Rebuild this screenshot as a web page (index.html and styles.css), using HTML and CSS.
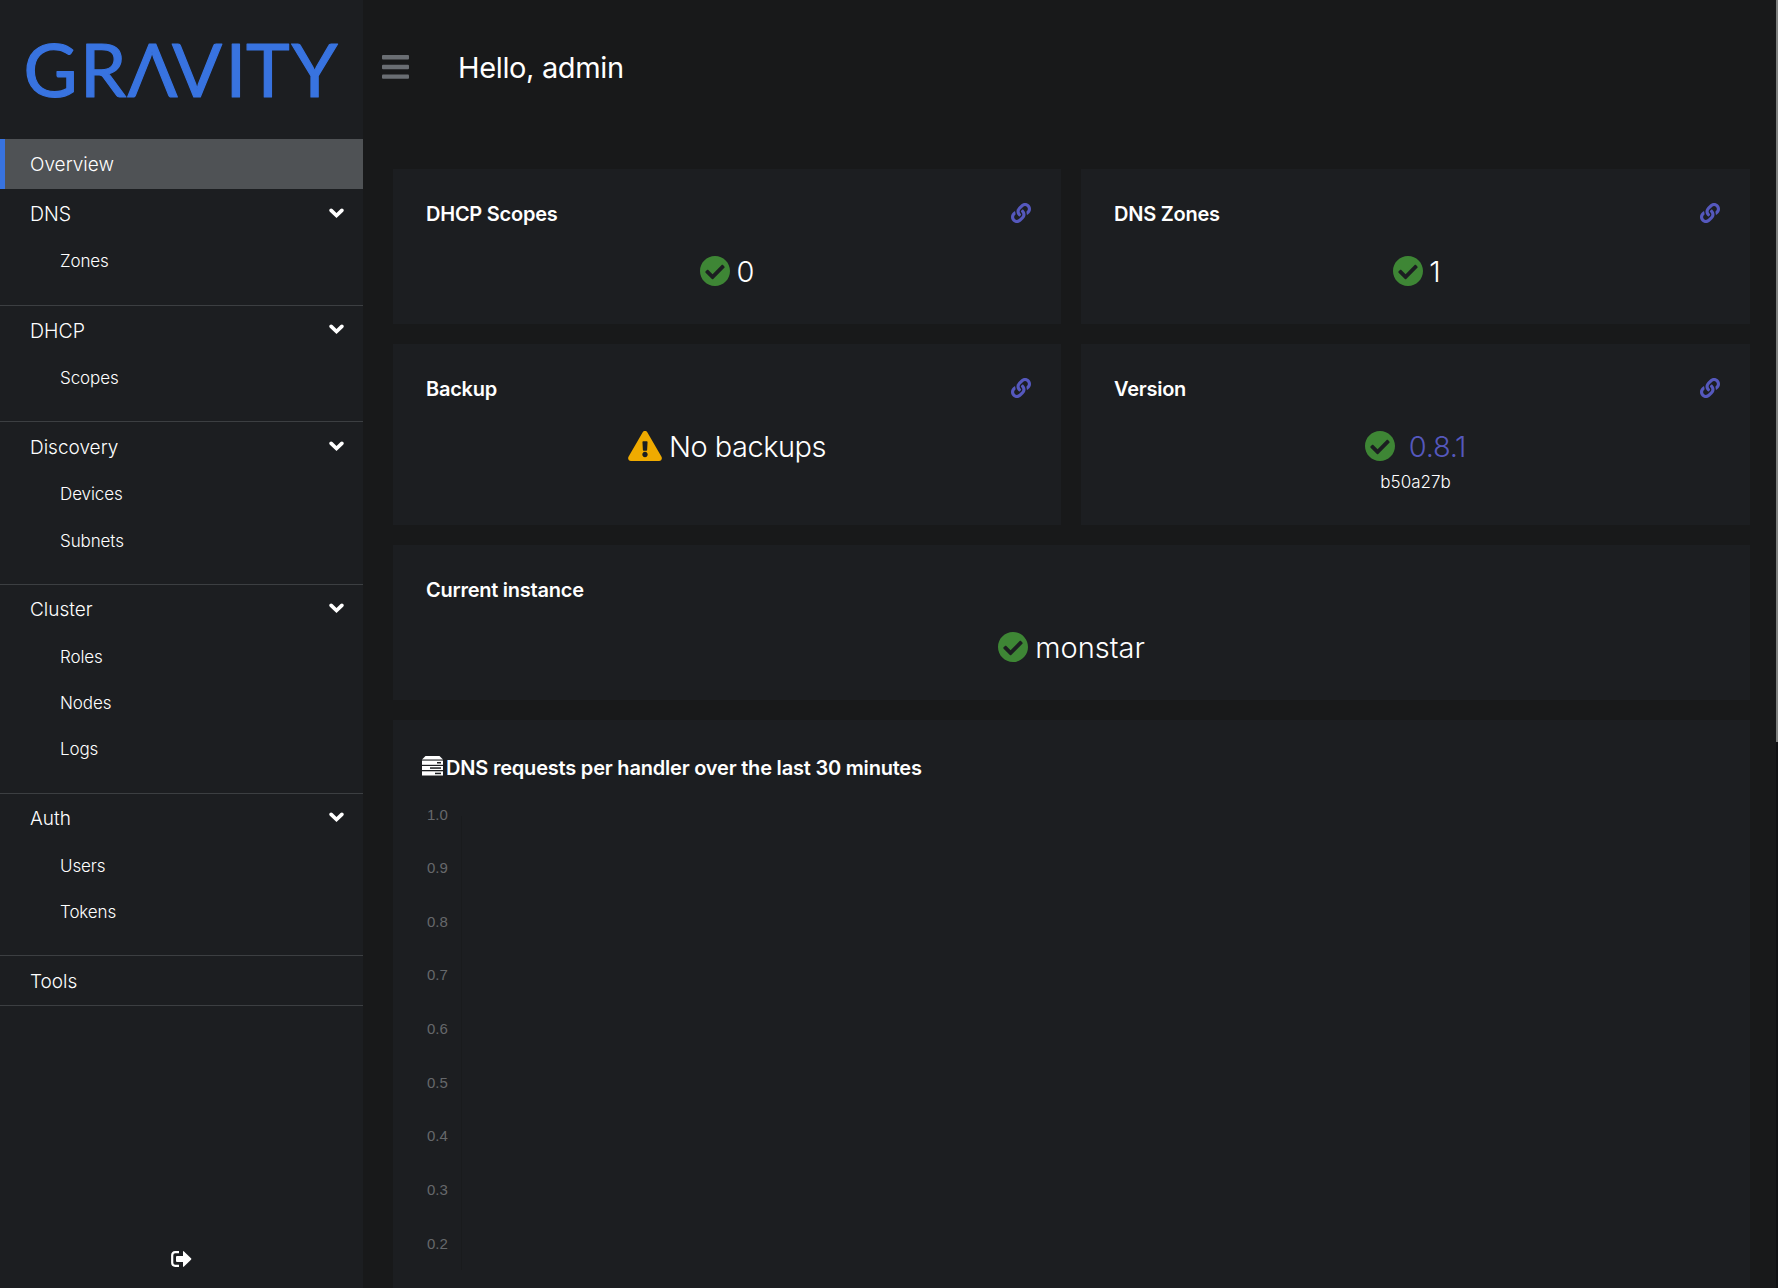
FILE: index.html
```html
<!DOCTYPE html>
<html lang="en">
<head>
<meta charset="utf-8">
<title>Gravity</title>
<link rel="stylesheet" href="styles.css">
</head>
<body>
<svg class="defs" width="0" height="0" aria-hidden="true">
  <symbol id="check" viewBox="8 8 496 496"><path d="M504 256c0 136.967-111.033 248-248 248S8 392.967 8 256 119.033 8 256 8s248 111.033 248 248zM227.314 387.314l184-184c6.248-6.248 6.248-16.379 0-22.627l-22.627-22.627c-6.248-6.249-16.379-6.249-22.628 0L216 308.118l-70.059-70.059c-6.248-6.248-16.379-6.248-22.628 0l-22.627 22.627c-6.248 6.248-6.248 16.379 0 22.627l104 104c6.249 6.249 16.379 6.249 22.628.001z"/></symbol>
  <symbol id="warn" viewBox="0 0 576 512"><path d="M569.517 440.013C587.975 472.007 564.806 512 527.94 512H48.054c-36.937 0-59.999-40.055-41.577-71.987L246.423 23.985c18.467-32.009 64.72-31.951 83.154 0l239.94 416.028zM288 354c-25.405 0-46 20.595-46 46s20.595 46 46 46 46-20.595 46-46-20.595-46-46-46zm-43.673-165.346l7.418 136c.347 6.364 5.609 11.346 11.982 11.346h48.546c6.373 0 11.635-4.982 11.982-11.346l7.418-136c.375-6.874-5.098-12.654-11.982-12.654h-63.383c-6.884 0-12.356 5.78-11.981 12.654z"/></symbol>
  <symbol id="link" viewBox="0 0 512 512"><path d="M326.612 185.391c59.747 59.809 58.927 155.698.36 214.59-.11.12-.24.25-.36.37l-67.2 67.2c-59.27 59.27-155.699 59.262-214.96 0-59.27-59.26-59.27-155.7 0-214.96l37.106-37.106c9.84-9.84 26.786-3.3 27.294 10.606.648 17.722 3.826 35.527 9.69 52.721 1.986 5.822.567 12.262-3.783 16.612l-13.087 13.087c-28.026 28.026-28.905 73.66-1.155 101.96 28.024 28.579 74.086 28.749 102.325.51l67.2-67.19c28.191-28.191 28.073-73.757 0-101.83-3.701-3.694-7.429-6.564-10.341-8.569a16.037 16.037 0 0 1-6.947-12.606c-.396-10.567 3.348-21.456 11.698-29.806l21.054-21.055c5.521-5.521 14.182-6.199 20.584-1.731a152.482 152.482 0 0 1 20.522 17.197zM467.547 44.449c-59.261-59.262-155.69-59.27-214.96 0l-67.2 67.2c-.12.12-.25.25-.36.37-58.566 58.892-59.387 154.781.36 214.59a152.454 152.454 0 0 0 20.521 17.196c6.402 4.468 15.064 3.789 20.584-1.731l21.054-21.055c8.35-8.35 12.094-19.239 11.698-29.806a16.037 16.037 0 0 0-6.947-12.606c-2.912-2.005-6.64-4.875-10.341-8.569-28.073-28.073-28.191-73.639 0-101.83l67.2-67.19c28.239-28.239 74.3-28.069 102.325.51 27.75 28.3 26.872 73.934-1.155 101.96l-13.087 13.087c-4.35 4.35-5.769 10.79-3.783 16.612 5.864 17.194 9.042 34.999 9.69 52.721.509 13.906 17.454 20.446 27.294 10.606l37.106-37.106c59.271-59.259 59.271-155.699.001-214.959z"/></symbol>
  <symbol id="chev" viewBox="0 0 14 9"><path d="M2 2l5 4.8L12 2" fill="none" stroke="currentColor" stroke-width="3.4" stroke-linecap="round"/></symbol>
</svg>
<div class="page">
  <aside class="sidebar">
    <div class="brand">
      <svg class="logo" width="363" height="139" role="img" aria-label="GRAVITY"><text y="96.5" x="23.5 80 127.5 172 225.5 246 291.5">GRΛVITY</text></svg>
    </div>
    <nav class="nav">
      <a class="row current">Overview</a>
      <section class="group"><div class="row caps">DNS<svg class="chev"><use href="#chev"/></svg></div>
        <ul><li>Zones</li></ul></section>
      <section class="group"><div class="row caps">DHCP<svg class="chev"><use href="#chev"/></svg></div>
        <ul><li>Scopes</li></ul></section>
      <section class="group"><div class="row">Discovery<svg class="chev"><use href="#chev"/></svg></div>
        <ul><li>Devices</li><li>Subnets</li></ul></section>
      <section class="group"><div class="row">Cluster<svg class="chev"><use href="#chev"/></svg></div>
        <ul><li>Roles</li><li>Nodes</li><li>Logs</li></ul></section>
      <section class="group"><div class="row">Auth<svg class="chev"><use href="#chev"/></svg></div>
        <ul><li>Users</li><li>Tokens</li></ul></section>
      <section class="group"><div class="row">Tools</div></section>
    </nav>
    <div class="signout">
      <svg width="21" height="16" viewBox="0 0 21 16"><path d="M8 1.2H4.2Q1.2 1.2 1.2 4.2v7.6q0 3 3 3H8" fill="none" stroke="#fff" stroke-width="2.2"/><path d="M6 5h6V.8q0-1.2 1-.3l7 6.8q.7.7 0 1.4l-7 6.8q-1 .9-1-.3V11H6q-1 0-1-1V6q0-1 1-1z" fill="#fff"/></svg>
    </div>
  </aside>
  <main class="main">
    <header class="header">
      <svg class="bars" width="27" height="24" viewBox="0 0 27 24"><rect y="0" width="27" height="4.4" rx="1"/><rect y="9.8" width="27" height="4.4" rx="1"/><rect y="19.4" width="27" height="4.4" rx="1"/></svg>
      <h1>Hello, admin</h1>
    </header>
    <div class="cards">
      <article class="card"><div class="head"><h2>DHCP Scopes</h2><svg class="link"><use href="#link"/></svg></div>
        <p class="value"><svg class="check"><use href="#check"/></svg><span>0</span></p></article>
      <article class="card"><div class="head"><h2>DNS Zones</h2><svg class="link"><use href="#link"/></svg></div>
        <p class="value one"><svg class="check"><use href="#check"/></svg><span>1</span></p></article>
      <article class="card"><div class="head"><h2>Backup</h2><svg class="link"><use href="#link"/></svg></div>
        <p class="value backup"><svg class="warn"><use href="#warn"/></svg><span>No backups</span></p></article>
      <article class="card"><div class="head"><h2>Version</h2><svg class="link"><use href="#link"/></svg></div>
        <p class="value version"><svg class="check"><use href="#check"/></svg><a>0.8.1</a></p><p class="hash">b50a27b</p></article>
      <article class="card wide"><div class="head"><h2>Current instance</h2></div>
        <p class="value"><svg class="check"><use href="#check"/></svg><span>monstar</span></p></article>
      <article class="card wide">
        <div class="chart-title"><svg width="21" height="20" viewBox="0 0 21 20"><path d="M3.5 0h14L21 3.6H0z"/><rect y="4.6" width="21" height="4.2"/><rect y="10" width="21" height="4"/><rect y="15.3" width="21" height="4.2"/><g class="slot"><rect x="15" y="6" width="4" height="1.5"/><rect x="8" y="11.3" width="11" height="1.5"/><rect x="13" y="16.7" width="6" height="1.5"/></g></svg><h2>DNS requests per handler over the last 30 minutes</h2></div>
        <div class="plot"><ol class="axis"><li>1.0</li><li>0.9</li><li>0.8</li><li>0.7</li><li>0.6</li><li>0.5</li><li>0.4</li><li>0.3</li><li>0.2</li></ol><div class="line"></div></div>
      </article>
    </div>
    <div class="scroll"><div class="thumb"></div></div>
  </main>
</div>
</body>
</html>
```
FILE: styles.css
```css
* { box-sizing: border-box; }
body { margin: 0; background: #18191a; color: #fff; font-family: Inter, "Liberation Sans", sans-serif; overflow: hidden; }
h1, h2, p, ul, ol { margin: 0; padding: 0; font-weight: inherit; list-style: none; }
.defs { position: absolute; }
svg { fill: currentColor; flex: none; }
.page { display: flex; height: 1288px; }
.sidebar { width: 363px; flex: none; background: #1c1e21; display: flex; flex-direction: column; }
.brand { height: 139px; }
.logo { display: block; }
.logo text { font-family: Lato, sans-serif; font-size: 74px; fill: #3873e0; stroke: #3873e0; stroke-width: 1.2px; stroke-linejoin: round; }
.nav { flex: 1; font-weight: 300; }
.row { display: flex; align-items: center; justify-content: space-between; height: 49px; padding: 1px 19px 0 30px; font-size: 19px; }
.caps { font-size: 19.5px; }
.current { height: 50px; background: #4f5255; border-left: 5px solid #3873e0; padding: 0 0 0 25px; }
.group { border-bottom: 1px solid #3c3f42; }
.group:nth-of-type(1) { padding-bottom: .6px; }
.group ul { padding: 0 0 20.1px; }
.group li { height: 46.25px; line-height: 46.25px; padding-left: 60px; font-size: 17px; letter-spacing: -.1px; }
.chev { width: 15px; height: 10px; margin-top: -3px; }
.signout { display: flex; justify-content: center; height: 37px; padding-right: 1px; }
.main { flex: 1; display: flex; flex-direction: column; position: relative; }
.header { height: 169px; display: flex; align-items: flex-start; padding: 55px 0 0 19px; gap: 49px; }
.bars { color: #6a6e73; }
.header h1 { font-size: 29px; line-height: 36px; margin-top: -5px; letter-spacing: -.36px; }
.cards { display: grid; grid-template-columns: 668px 669px; grid-template-rows: 155px 181px 155px 620px; gap: 20px; padding-left: 30px; height: 1119px; overflow: hidden; }
.card { background: #1c1e21; }
.wide { grid-column: 1 / 3; }
.head { display: flex; justify-content: space-between; align-items: center; padding: 30px 30px 0 33px; height: 59px; }
h2 { font-size: 20px; font-weight: 600; line-height: 28px; letter-spacing: -.24px; white-space: nowrap; }
.link { width: 20px; height: 20px; color: #5558bd; margin-top: -1px; }
.value { display: flex; align-items: center; justify-content: center; gap: 7px; height: 42px; margin-top: 22px; font-size: 29px; font-weight: 300; }
.check { width: 30px; height: 30px; color: #3e8635; margin-top: -1px; }
.warn { width: 34px; height: 30px; color: #f0ab00; margin-top: -1px; }
.one { gap: 6px; padding-left: 1px; }
.one span { letter-spacing: -2px; }
.backup { letter-spacing: -.5px; }
.version { gap: 14px; letter-spacing: -.3px; }
.version a { color: #5558bd; }
.hash { text-align: center; font-size: 17px; font-weight: 300; line-height: 30px; }
.chart-title { display: flex; gap: 3px; padding: 34px 0 0 29px; }
.chart-title svg { margin-top: 2px; }
.chart-title h2 { letter-spacing: -.2px; }
.slot { color: #1c1e21; fill: #1c1e21; }
.plot { display: flex; padding: 5.5px 0 0 34px; gap: 13px; }
.axis { font: 15px/53.65px "Liberation Sans", sans-serif; color: #66686b; }
.axis li { height: 53.65px; }
.line { width: 1px; margin-top: 28px; background: #191b1d; }
.scroll { position: absolute; right: 0; top: 0; width: 2px; height: 1288px; background: #101114; }
.thumb { height: 742px; background: #7f8180; }
```
